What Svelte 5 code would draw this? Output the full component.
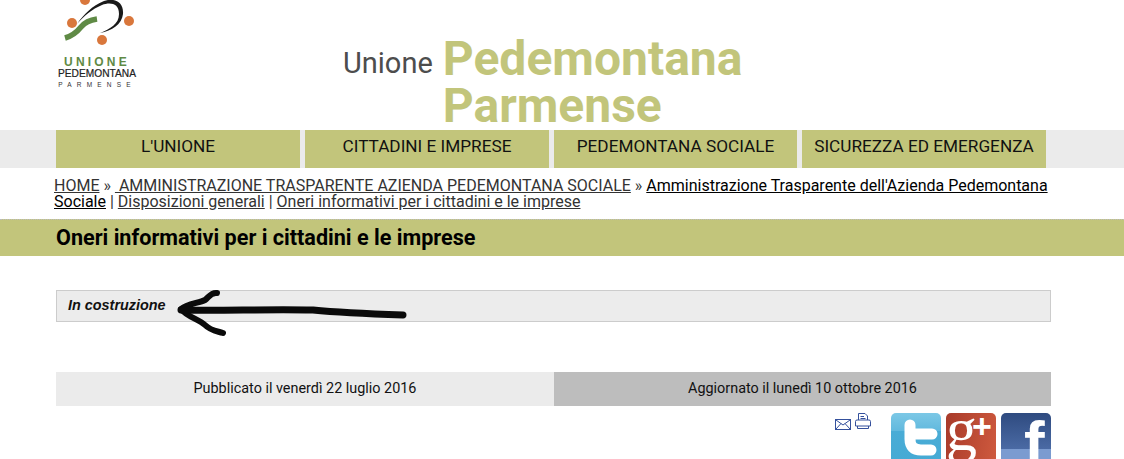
<script>
  const menu = ["L'UNIONE", "CITTADINI E IMPRESE", "PEDEMONTANA SOCIALE", "SICUREZZA ED EMERGENZA"];
</script>

<div class="page">
  <header class="top">
    <div class="logo">
      <svg class="mark" width="82" height="47" viewBox="0 0 82 47">
        <circle cx="29" cy="0" r="5" fill="#d9773c" />
        <circle cx="16" cy="23" r="5" fill="#d9773c" />
        <circle cx="73" cy="21" r="5" fill="#d9773c" />
        <circle cx="46" cy="40" r="5" fill="#d9773c" />
        <path d="M9 38 C16 36 21 32 25 27 C29 22 34 20 41 19" fill="none" stroke="#5f8a45" stroke-width="5.5" />
        <path d="M21 24 C28 14 36 6 48 1 C56 -2 68 0 67 14 C66 24 56 31 44 33 C54 29 63 24 63 14 C63 3 54 2 46 5 C36 9 28 16 21 24 Z" fill="#1a1a1a" />
      </svg>
      <div class="u">UNIONE</div>
      <div class="p">PEDEMONTANA</div>
      <div class="m">PARMENSE</div>
    </div>
    <div class="brand">
      <span class="unione">Unione</span>
      <h1>Pedemontana Parmense</h1>
    </div>
  </header>

  <nav class="menu">
    {#each menu as item}
      <a href="#top">{item}</a>
    {/each}
  </nav>

  <div class="crumbs">
    <a class="dim" href="#top">HOME</a> <span class="sep">»</span> <a class="dim" href="#top">&nbsp;AMMINISTRAZIONE TRASPARENTE AZIENDA PEDEMONTANA SOCIALE</a> <span class="sep">»</span> <a href="#top">Amministrazione Trasparente dell'Azienda Pedemontana Sociale</a> <span class="sep">|</span> <a class="dim" href="#top">Disposizioni generali</a> <span class="sep">|</span> <a class="dim" href="#top">Oneri informativi per i cittadini e le imprese</a>
  </div>

  <h2 class="title">Oneri informativi per i cittadini e le imprese</h2>

  <div class="notice">
    <em>In costruzione</em>
    <svg class="arrow" width="250" height="50" viewBox="0 0 250 50">
      <path d="M54 4 C48 3 46 8 42 11 C36 14 24 15 18 20 C24 28 36 30 42 36 C48 42 54 42 60 44" fill="none" stroke="#0a0a0a" stroke-width="6" stroke-linecap="round" stroke-linejoin="round" />
      <path d="M18 21 C60 22 100 20 150 21 C180 24 210 25 240 26" fill="none" stroke="#0a0a0a" stroke-width="7" stroke-linecap="round" />
    </svg>
  </div>

  <div class="dates">
    <div class="pub">Pubblicato il venerdì 22 luglio 2016</div>
    <div class="upd">Aggiornato il lunedì 10 ottobre 2016</div>
  </div>

  <div class="tools">
    <svg class="mail" width="16" height="11" viewBox="0 0 16 11">
      <rect x="0.5" y="0.5" width="15" height="10" fill="#fff" stroke="#34509c" />
      <path d="M1 1 L8 6 L15 1 M1 10 L6 4.5 M15 10 L10 4.5" fill="none" stroke="#34509c" />
    </svg>
    <svg class="print" width="16" height="17" viewBox="0 0 16 17">
      <path d="M3.5 7 V0.5 H10 L12.5 3 V7 M2 7 H14 Q15.5 7 15.5 8.5 V13 H0.5 V8.5 Q0.5 7 2 7 Z M2.5 13 V15.5 H13.5 V13 M5.5 3.5 H9 M5.5 5.5 H10.5" fill="#fff" stroke="#34509c" />
    </svg>
    <div class="social">
      <div class="ico tw">
        <svg width="50" height="50" viewBox="0 0 50 50">
          <path d="M19 12 V26 Q19 37 30 37 H40 M19 21 H41" fill="none" stroke="#fff" stroke-width="11" stroke-linecap="round" />
        </svg>
      </div>
      <div class="ico gp"><span class="g">g</span><span class="plus">+</span></div>
      <div class="ico fb"><span>f</span></div>
    </div>
  </div>
</div>

<style>
  :global(body) {
    margin: 0;
    overflow: hidden;
    background: #fff;
  }
  .page {
    width: 1124px;
    height: 459px;
    overflow: hidden;
    font-family: Roboto, "Liberation Sans", sans-serif;
    color: #111;
  }
  .top {
    height: 130px;
    display: flex;
    padding-left: 56px;
    box-sizing: border-box;
  }
  .logo {
    width: 82px;
    text-align: center;
    font-family: "Liberation Sans", sans-serif;
  }
  .mark {
    display: block;
    margin-bottom: 9px;
  }
  .u {
    font-size: 12px;
    font-weight: bold;
    line-height: 12px;
    letter-spacing: 3.2px;
    color: #5f8a45;
  }
  .p {
    font-size: 10.2px;
    line-height: 12px;
    color: #222;
    white-space: nowrap;
    -webkit-text-stroke: 0.2px #222;
  }
  .m {
    font-size: 6.5px;
    line-height: 10px;
    letter-spacing: 5.2px;
    white-space: nowrap;
    color: #333;
  }
  .brand {
    display: flex;
    margin-left: 205px;
    padding-top: 35px;
  }
  .unione {
    font-size: 29px;
    line-height: 57px;
    color: #4d4d4d;
    margin-right: 10px;
  }
  h1 {
    margin: 0;
    width: 320px;
    font-size: 48px;
    line-height: 47px;
    font-weight: bold;
    color: #c2c57b;
  }
  .menu {
    height: 38px;
    background: #ebebeb;
    display: flex;
    gap: 5px;
    padding-left: 56px;
  }
  .menu a {
    width: 244px;
    background: #c2c57b;
    color: #111;
    text-decoration: none;
    text-align: center;
    font-size: 17.2px;
    line-height: 33px;
  }
  .menu a:nth-child(3) {
    width: 243px;
  }
  .crumbs {
    width: 1000px;
    margin: 10px 0 0 54px;
    height: 41px;
    font-size: 16px;
    line-height: 16px;
    color: #333;
  }
  .crumbs a {
    color: #000;
  }
  .crumbs a.dim {
    color: #333;
  }
  .title {
    margin: 0;
    height: 37px;
    background: #c2c57b;
    border-top: 1px dotted #bbb;
    box-sizing: border-box;
    padding-left: 56px;
    font-size: 21.6px;
    line-height: 36px;
    font-weight: bold;
    color: #000;
  }
  .notice {
    position: relative;
    width: 995px;
    height: 32px;
    box-sizing: border-box;
    margin: 34px 0 0 56px;
    padding-left: 11px;
    background: #ececec;
    border: 1px solid #ccc;
    font-family: "Liberation Sans", sans-serif;
    font-size: 14.4px;
    font-weight: bold;
    line-height: 29px;
  }
  .arrow {
    position: absolute;
    left: 106px;
    top: -2px;
  }
  .dates {
    display: flex;
    width: 995px;
    margin: 50px 0 0 56px;
    font-size: 14.4px;
    line-height: 34px;
    text-align: center;
  }
  .pub {
    width: 498px;
    background: #ebebeb;
  }
  .upd {
    flex: 1;
    background: #bdbdbd;
  }
  .tools {
    display: flex;
    align-items: flex-start;
    width: 995px;
    margin: 7px 0 0 56px;
    justify-content: flex-end;
  }
  .mail {
    margin: 6px 4px 0 0;
  }
  .print {
    margin-right: 20px;
  }
  .social {
    display: flex;
    gap: 5px;
  }
  .ico {
    position: relative;
    width: 50px;
    height: 50px;
    border-radius: 5px;
    overflow: hidden;
    color: #fff;
  }
  .ico svg {
    display: block;
  }
  .ico span {
    position: absolute;
  }
  .tw {
    background: linear-gradient(#7cc8e6 0, #62b9de 35%, #49acd6 36%, #46aad4 100%);
  }
  .gp {
    background: linear-gradient(100deg, #a83a2a, #cf5a3e);
  }
  .gp .g {
    left: 0;
    top: -15px;
    font-family: "Liberation Serif", serif;
    font-size: 62px;
    line-height: 62px;
  }
  .gp .plus {
    left: 26px;
    top: -7px;
    font-family: "Liberation Sans", sans-serif;
    font-size: 34px;
    line-height: 40px;
    font-weight: bold;
  }
  .fb {
    background: linear-gradient(#2f4b80 0, #4a6aa4 72%, #7b9bd0 73%, #7b9bd0 100%);
  }
  .fb span {
    left: 23px;
    top: -1px;
    font-family: "Liberation Sans", sans-serif;
    font-size: 62px;
    line-height: 62px;
    font-weight: bold;
  }
</style>
